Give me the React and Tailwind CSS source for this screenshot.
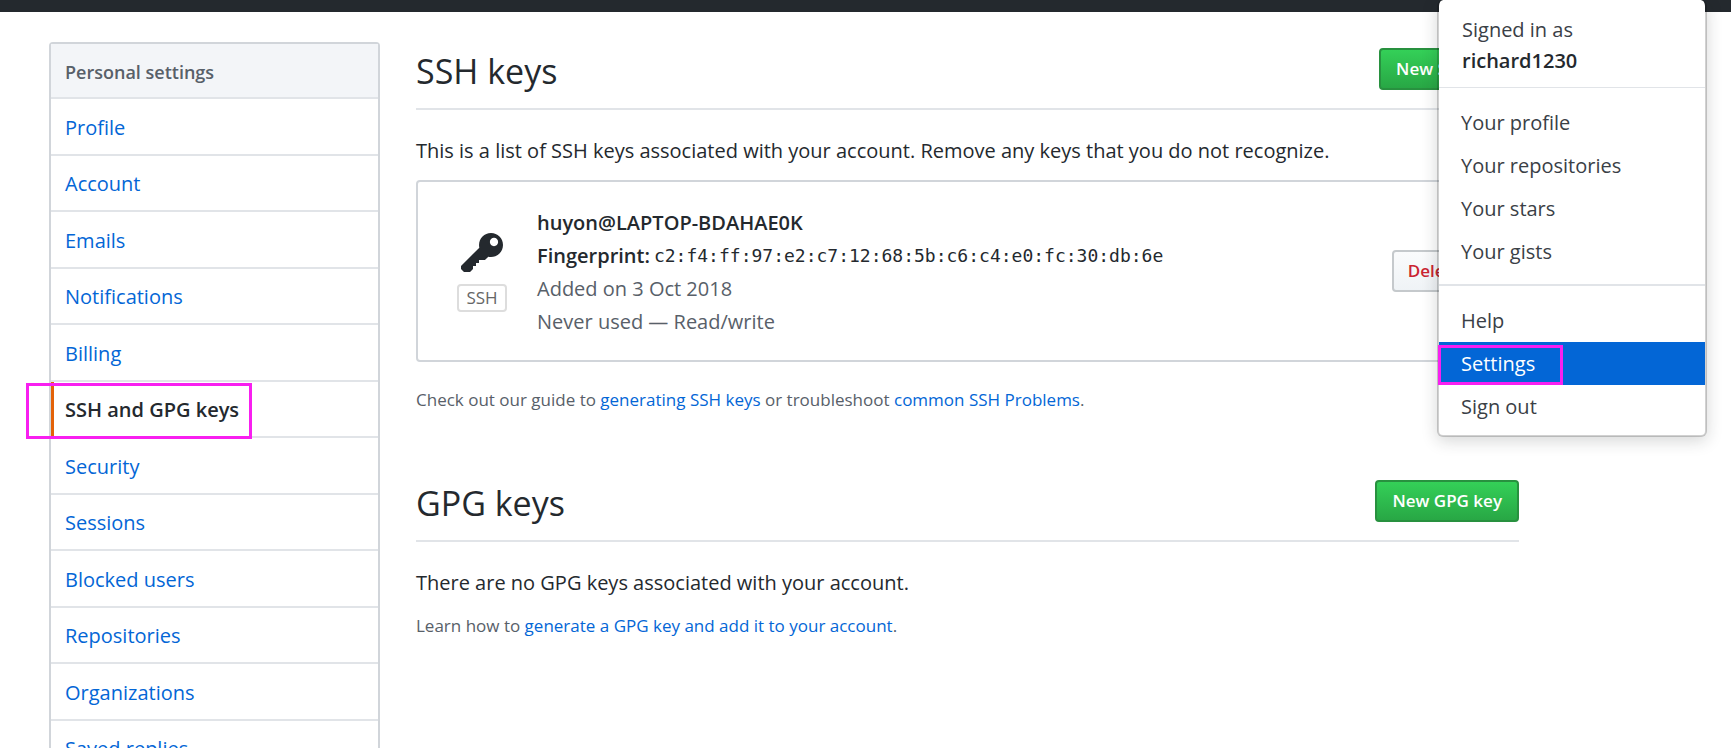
const sections = [
  'Profile',
  'Account',
  'Emails',
  'Notifications',
  'Billing',
  'SSH and GPG keys',
  'Security',
  'Sessions',
  'Blocked users',
  'Repositories',
  'Organizations',
  'Saved replies',
];

const accountLinks = ['Your profile', 'Your repositories', 'Your stars', 'Your gists'];
const sessionLinks = ['Help', 'Settings', 'Sign out'];

function KeyIcon() {
  return (
    <svg viewBox="0 0 14 16" className="h-12 w-[42px] fill-[#24292e]" aria-hidden="true">
      <path
        fillRule="evenodd"
        d="M12.83 2.17C12.08 1.42 11.14 1.03 10 1c-1.13.03-2.08.42-2.83 1.17S6.04 3.86 6.01 5c0 .3.03.59.09.89L0 12v1l1 1h2l1-1v-1h1v-1h1v-1h2l1.09-1.11c.3.08.59.11.91.11 1.14-.03 2.08-.42 2.83-1.17S13.97 6.14 14 5c-.03-1.14-.42-2.08-1.17-2.83zM11 5.38c-.77 0-1.38-.61-1.38-1.38 0-.77.61-1.38 1.38-1.38.77 0 1.38.61 1.38 1.38 0 .77-.61 1.38-1.38 1.38z"
      />
    </svg>
  );
}

function Sidebar() {
  return (
    <nav aria-label="Personal settings" className="w-[331px] shrink-0 rounded-t border-x-2 border-t-2 border-[#d1d5da]">
      <h2 className="flex h-[55px] items-center border-b-2 border-[#e1e4e8] bg-[#f3f5f8] pl-3.5 pt-0.5 text-[18px] font-semibold text-[#586069]">
        Personal settings
      </h2>
      <ul>
        {sections.map((name) => {
          const current = name === 'SSH and GPG keys';
          return (
            <li key={name} className="relative border-b-2 border-[#e1e4e8] odd:h-[57px] even:h-14">
              <a
                href="#"
                aria-current={current ? 'page' : undefined}
                className={
                  current
                    ? 'flex h-full items-center border-l-3 border-[#e36209] pl-[11px] pt-0.5 font-semibold text-[#24292e]'
                    : 'flex h-full items-center pl-3.5 pt-0.5 text-[#0366d6]'
                }
              >
                {name}
              </a>
              {current && (
                <span className="pointer-events-none absolute -left-[25px] top-px h-14 w-[226px] border-3 border-[#f81ff0]" />
              )}
            </li>
          );
        })}
      </ul>
    </nav>
  );
}

function SectionHeading({ title, action }) {
  return (
    <div className="flex h-[70px] items-start justify-between border-b-2 border-[#e1e4e8]">
      <h2 className="text-[34px] leading-[62px]">{title}</h2>
      <button
        type="button"
        className="mt-2 h-[42px] rounded border-2 border-[#28913f] bg-linear-to-b from-[#34d058] to-[#28a745] px-[15px] text-[17px] font-semibold text-white"
      >
        {action}
      </button>
    </div>
  );
}

function AccountMenu() {
  return (
    <div className="absolute right-6 top-0 w-[270px] rounded-md border-x-2 border-b-2 border-black/18 bg-white bg-clip-padding pb-[7px] text-[#3a4046] shadow-[0_4px_16px_rgba(27,31,35,0.18)]">
      <div className="h-[88px] border-b border-[#e1e4e8] pl-[23px] pt-3.5 leading-[31px]">
        Signed in as
        <br />
        <strong className="font-semibold text-[#24292e]">richard1230</strong>
      </div>
      <ul className="border-b-2 border-[#e1e4e8] pb-[11px] pt-[13px]">
        {accountLinks.map((name) => (
          <li key={name}>
            <a href="#" className="flex h-[43px] items-center pl-[22px]">
              {name}
            </a>
          </li>
        ))}
      </ul>
      <ul className="pt-[13px]">
        {sessionLinks.map((name) => {
          const active = name === 'Settings';
          return (
            <li key={name} className="relative">
              <a
                href="#"
                className={
                  active
                    ? 'flex h-[43px] items-center bg-[#0366d6] pl-[22px] text-white'
                    : 'flex h-[43px] items-center pl-[22px]'
                }
              >
                {name}
              </a>
              {active && (
                <span className="pointer-events-none absolute -left-px bottom-0 h-10 w-[125px] border-3 border-[#f81ff0]" />
              )}
            </li>
          );
        })}
      </ul>
    </div>
  );
}

export default function App() {
  return (
    <div className="relative h-screen overflow-hidden bg-white font-['Open_Sans','Noto_Sans',sans-serif] text-[20px] leading-[30px] text-[#24292e]">
      <header className="h-3 bg-[#24292e]" />
      <div className="flex items-start gap-9 pl-[49px] pr-[212px] pt-[30px]">
        <Sidebar />
        <main className="min-w-0 flex-1 -mt-2">
          <div className="pt-1.5">
            <SectionHeading title="SSH keys" action="New SSH key" />
            <p className="pt-[26px]">
              This is a list of SSH keys associated with your account. Remove any keys that you do not recognize.
            </p>
            <div className="mt-3.5 flex h-[182px] items-center rounded border-2 border-[#d1d5da] pl-[39px] pr-10">
              <div className="flex flex-col items-center gap-1.5">
                <KeyIcon />
                <span className="flex h-7 w-[50px] items-center justify-center rounded border-2 border-[#dddddd] text-[17px] text-[#666]">
                  SSH
                </span>
              </div>
              <div className="ml-[30px] flex-1 pt-px leading-[33px]">
                <strong className="block font-semibold">huyon@LAPTOP-BDAHAE0K</strong>
                <div className="flex items-center gap-1">
                  <span className="font-semibold">Fingerprint:</span>
                  <code className="font-['DejaVu_Sans_Mono',monospace] text-[18px]">
                    c2:f4:ff:97:e2:c7:12:68:5b:c6:c4:e0:fc:30:db:6e
                  </code>
                </div>
                <div className="text-[#586069]">Added on 3 Oct 2018</div>
                <div className="text-[#586069]">Never used — Read/write</div>
              </div>
              <button
                type="button"
                className="h-[42px] rounded border-2 border-[#c5c9cc] bg-linear-to-b from-[#fafbfc] to-[#eff3f6] px-3.5 text-[17px] font-semibold text-[#cb2431]"
              >
                Delete
              </button>
            </div>
            <p className="pt-[23px] text-[17px] text-[#586069]">
              Check out our guide to{' '}
              <a href="#" className="text-[#0366d6]">generating SSH keys</a> or troubleshoot{' '}
              <a href="#" className="text-[#0366d6]">common SSH Problems</a>.
            </p>
          </div>
          <div className="pt-[57px]">
            <SectionHeading title="GPG keys" action="New GPG key" />
            <p className="pt-[26px]">There are no GPG keys associated with your account.</p>
            <p className="pt-[13px] text-[17px] text-[#586069]">
              Learn how to{' '}
              <a href="#" className="text-[#0366d6]">generate a GPG key and add it to your account</a>.
            </p>
          </div>
        </main>
      </div>
      <AccountMenu />
    </div>
  );
}
